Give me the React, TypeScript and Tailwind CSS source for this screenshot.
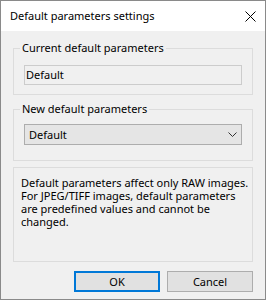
import React from "react";

const font = { fontFamily: '"Noto Sans", "Open Sans", sans-serif' };

const App = () => {
  return (
    <div
      className="w-[266px] h-[300px] border border-[#8a8a8a] bg-[#f0f0f0] flex flex-col text-[11px] text-black overflow-hidden"
      style={font}
    >
      {/* Title bar */}
      <div className="h-[30px] bg-white flex items-center justify-between pl-[9px] pr-[9px] shrink-0">
        <span className="leading-[16px]">Default parameters settings</span>
        <svg width="11" height="11" viewBox="0 0 11 11" className="text-black">
          <path d="M0.5 0.5L10.5 10.5M10.5 0.5L0.5 10.5" stroke="currentColor" strokeWidth="1" />
        </svg>
      </div>

      {/* Body */}
      <div className="flex-1 flex flex-col px-[12px]">
        {/* Current default parameters */}
        <fieldset className="mt-[9px] border border-[#dcdcdc] px-[10px] pb-[9px] pt-[9px]">
          <legend className="-ml-[4px] px-[2px] leading-[16px]">Current default parameters</legend>
          <div className="h-[20px] border border-[#cccccc] bg-[#f0f0f0] flex items-center px-[1px] leading-[16px]">
            Default
          </div>
        </fieldset>

        {/* New default parameters */}
        <fieldset className="mt-[6px] border border-[#dcdcdc] px-[10px] pb-[15px] pt-[7px]">
          <legend className="-ml-[4px] px-[2px] leading-[16px]">New default parameters</legend>
          <div className="h-[21px] border border-[#adadad] bg-[#e5e5e5] flex items-center justify-between pl-[4px] pr-[4px] leading-[16px]">
            <span>Default</span>
            <svg width="9" height="5" viewBox="0 0 9 5">
              <path d="M0.5 0.5L4.5 4.5L8.5 0.5" stroke="#333" strokeWidth="1" fill="none" />
            </svg>
          </div>
        </fieldset>

        {/* Info */}
        <div className="mt-[6px] h-[95px] border border-[#dcdcdc] pl-[7px] pr-[2px] pt-[8px] leading-[13px] whitespace-nowrap">
          <div>Default parameters affect only RAW images.</div>
          <div>For JPEG/TIFF images, default parameters</div>
          <div>are predefined values and cannot be</div>
          <div>changed.</div>
        </div>

        {/* Buttons */}
        <div className="mt-[9px] flex justify-end gap-[7px]">
          <button className="w-[86px] h-[21px] border-2 border-[#0078d7] bg-[#e1e1e1] leading-[16px]">
            OK
          </button>
          <button className="w-[86px] h-[21px] border border-[#adadad] bg-[#e1e1e1] leading-[16px]">
            Cancel
          </button>
        </div>
      </div>
    </div>
  );
};

export default App;
